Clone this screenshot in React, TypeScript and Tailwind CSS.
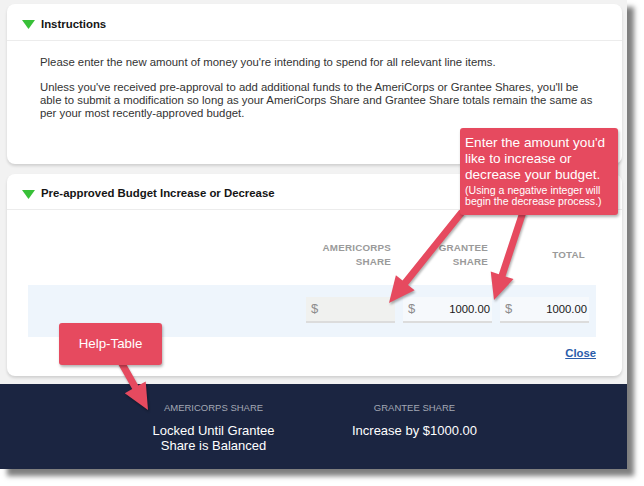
const font = "font-['Liberation_Sans',Arial,sans-serif]"

function Caret() {
    return (
        <svg width="13" height="9" viewBox="0 0 13 9" className="shrink-0">
            <polygon points="0,0 13,0 6.5,9" fill="#38c038" />
        </svg>
    )
}

function CardHeader({ title, h }: { title: string; h: string }) {
    return (
        <div className={`flex items-center gap-[6px] pl-[15px] pt-[5px] border-b border-[#ececec] ${h}`}>
            <Caret />
            <span className="text-[11.4px] font-bold text-[#151515]">{title}</span>
        </div>
    )
}

function MoneyInput({ value, locked }: { value?: string; locked?: boolean }) {
    return (
        <div
            className={`w-[89px] h-[26px] flex items-center justify-between pl-[5px] pr-[2px] border-b-2 border-[#dcdcdc] ${locked ? "bg-[#f0f1ef]" : "bg-[#f6f9fc]"}`}
        >
            <span className="text-[13px] text-[#8c8c8c]">$</span>
            <span className="text-[11.3px] text-[#1a1a1a]">{value}</span>
        </div>
    )
}

function arrow(x1: number, y1: number, x2: number, y2: number) {
    const sw = 7
    const hl = 26
    const hw = 24
    const len = Math.hypot(x2 - x1, y2 - y1)
    const ux = (x2 - x1) / len
    const uy = (y2 - y1) / len
    const nx = -uy
    const ny = ux
    const bx = x2 - ux * hl
    const by = y2 - uy * hl
    const p = (x: number, y: number) => `${x.toFixed(1)},${y.toFixed(1)}`
    return [
        p(x1 + (nx * sw) / 2, y1 + (ny * sw) / 2),
        p(bx + (nx * sw) / 2, by + (ny * sw) / 2),
        p(bx + (nx * hw) / 2, by + (ny * hw) / 2),
        p(x2, y2),
        p(bx - (nx * hw) / 2, by - (ny * hw) / 2),
        p(bx - (nx * sw) / 2, by - (ny * sw) / 2),
        p(x1 - (nx * sw) / 2, y1 - (ny * sw) / 2),
    ].join(" ")
}

export default function App() {
    return (
        <div className={`w-[644px] h-[486px] bg-white ${font}`}>
            <div className="relative w-[627px] h-[469px] bg-[#f2f2f2] shadow-[7px_7px_5px_rgba(0,0,0,0.5)]">
                <div className="flex flex-col gap-[10px] pt-1 pl-[7px] pr-[5px]">
                    {/* instructions */}
                    <div className="h-[160px] rounded-lg bg-white shadow-[0_2px_3px_rgba(0,0,0,0.14)]">
                        <CardHeader title="Instructions" h="h-[37px]" />
                        <div className="pl-[33px] pr-[10px] pt-[15px] text-[11.35px] leading-[13px] text-[#333]">
                            <p>Please enter the new amount of money you're intending to spend for all relevant line items.</p>
                            <p className="mt-[12px]">
                                Unless you've received pre-approval to add additional funds to the AmeriCorps or Grantee Shares, you'll be
                                <br />
                                able to submit a modification so long as your AmeriCorps Share and Grantee Share totals remain the same as
                                <br />
                                per your most recently-approved budget.
                            </p>
                        </div>
                    </div>

                    {/* budget table */}
                    <div className="h-[202px] rounded-lg bg-white shadow-[0_2px_3px_rgba(0,0,0,0.14)]">
                        <CardHeader title="Pre-approved Budget Increase or Decrease" h="h-[36px]" />
                        <div className="ml-[21px] mr-[26px]">
                            <div className="mt-[31px] mb-[16px] h-[28px] flex items-center justify-end gap-2 pr-[7px] text-[9.8px] leading-[14px] font-bold text-[#9a9a9a] tracking-[0.2px]">
                                <div className="w-[89px] text-right pr-1">AMERICORPS<br />SHARE</div>
                                <div className="w-[89px] text-right pr-1">GRANTEE<br />SHARE</div>
                                <div className="w-[89px] text-right pr-1">TOTAL</div>
                            </div>
                            <div className="bg-[#eef5fc] flex justify-end gap-2 pr-[7px] pt-[12px] pb-[14px]">
                                <MoneyInput locked />
                                <MoneyInput value="1000.00" />
                                <MoneyInput value="1000.00" />
                            </div>
                            <div className="mt-[10px] flex justify-end">
                                <a className="text-[11.3px] leading-[13px] font-bold text-[#2a5caa] underline">Close</a>
                            </div>
                        </div>
                    </div>
                </div>

                {/* help table */}
                <div className="mt-[8px] h-[85px] bg-[#1b2541] flex pl-[113px] pt-[18px]">
                    <div className="w-[201px] text-center">
                        <div className="text-[9.5px] leading-[12px] text-[#a3a8b4]">AMERICORPS SHARE</div>
                        <div className="mt-[9px] text-[13px] leading-[15px] text-white">
                            Locked Until Grantee<br />Share is Balanced
                        </div>
                    </div>
                    <div className="w-[201px] text-center">
                        <div className="text-[9.5px] leading-[12px] text-[#a3a8b4]">GRANTEE SHARE</div>
                        <div className="mt-[9px] text-[13px] leading-[15px] text-white">Increase by $1000.00</div>
                    </div>
                </div>

                {/* annotations */}
                <svg
                    width="627"
                    height="469"
                    className="absolute inset-0 pointer-events-none drop-shadow-[1px_2px_1px_rgba(0,0,0,0.3)]"
                >
                    <polygon points={arrow(462, 212, 389, 303)} fill="#e64a5f" />
                    <polygon points={arrow(523, 212, 494, 300)} fill="#e64a5f" />
                    <polygon points={arrow(121, 362, 148, 410)} fill="#e64a5f" />
                </svg>
                <div className="absolute left-[460px] top-[128px] w-[158px] h-[87px] rounded-[3px] bg-[#e64a5f] shadow-[1px_2px_3px_rgba(0,0,0,0.3)] px-[5px] pt-[7px] text-white">
                    <div className="text-[13.6px] leading-[16px]">
                        Enter the amount you'd<br />like to increase or<br />decrease your budget.
                    </div>
                    <div className="mt-[2px] text-[10.6px] leading-[11px]">
                        (Using a negative integer will<br />begin the decrease process.)
                    </div>
                </div>
                <div className="absolute left-[59px] top-[323px] w-[103px] h-[42px] rounded-[3px] bg-[#e64a5f] shadow-[1px_2px_3px_rgba(0,0,0,0.3)] flex items-center justify-center text-[13.3px] text-white">
                    Help-Table
                </div>
            </div>
        </div>
    )
}
